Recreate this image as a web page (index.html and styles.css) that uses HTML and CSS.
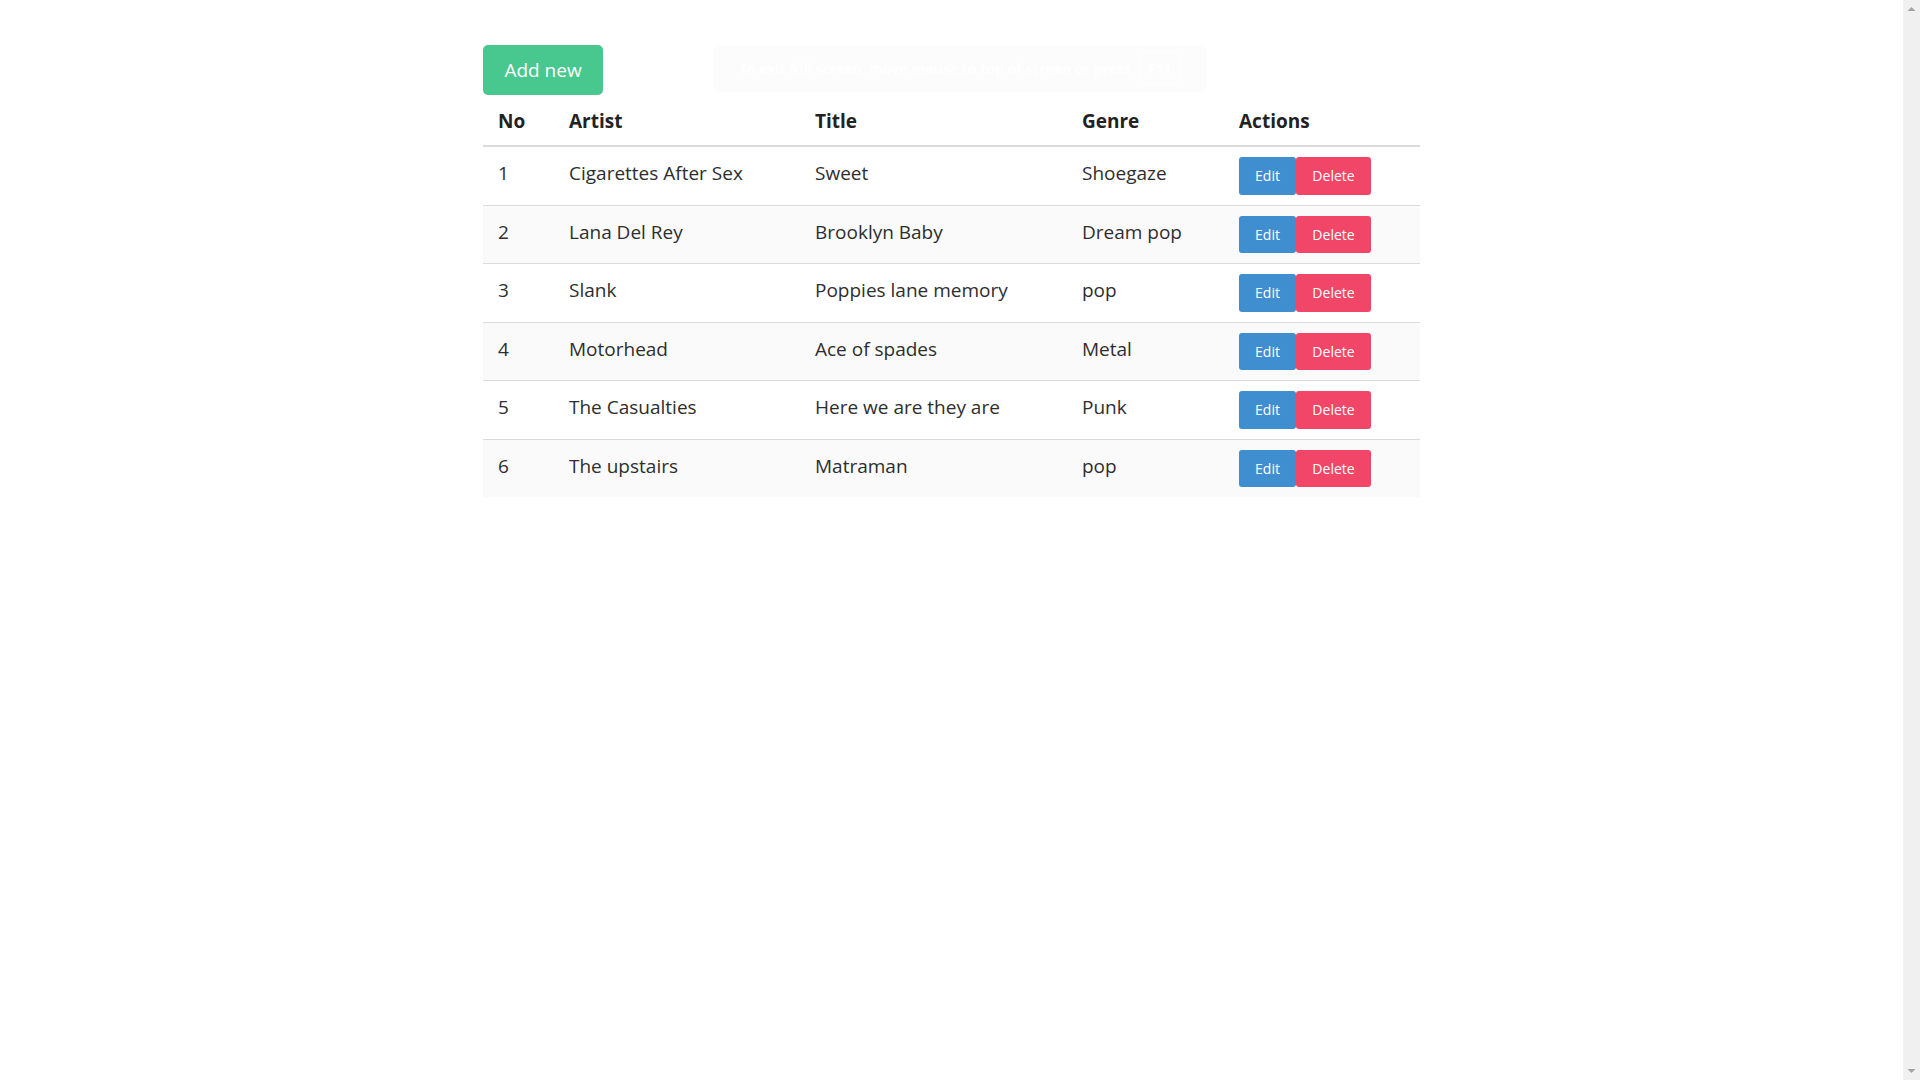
FILE: index.html
```html
<!DOCTYPE html>
<html lang="en">
<head>
<meta charset="utf-8">
<title>Songs</title>
<link rel="stylesheet" href="styles.css">
</head>
<body>
<div class="viewport">
  <div class="page">
    <div class="toolbar">
      <button class="btn btn-success">Add new</button>
    </div>
    <table class="table">
      <colgroup>
        <col class="col-no"><col class="col-artist"><col class="col-title"><col class="col-genre"><col class="col-actions">
      </colgroup>
      <thead>
        <tr><th>No</th><th>Artist</th><th>Title</th><th>Genre</th><th>Actions</th></tr>
      </thead>
      <tbody>
        <tr><td>1</td><td>Cigarettes After Sex</td><td>Sweet</td><td>Shoegaze</td><td class="cell-actions"><div class="actions"><button class="btn-sm btn-info">Edit</button><button class="btn-sm btn-danger">Delete</button></div></td></tr>
        <tr><td>2</td><td>Lana Del Rey</td><td>Brooklyn Baby</td><td>Dream pop</td><td class="cell-actions"><div class="actions"><button class="btn-sm btn-info">Edit</button><button class="btn-sm btn-danger">Delete</button></div></td></tr>
        <tr><td>3</td><td>Slank</td><td>Poppies lane memory</td><td>pop</td><td class="cell-actions"><div class="actions"><button class="btn-sm btn-info">Edit</button><button class="btn-sm btn-danger">Delete</button></div></td></tr>
        <tr><td>4</td><td>Motorhead</td><td>Ace of spades</td><td>Metal</td><td class="cell-actions"><div class="actions"><button class="btn-sm btn-info">Edit</button><button class="btn-sm btn-danger">Delete</button></div></td></tr>
        <tr><td>5</td><td>The Casualties</td><td>Here we are they are</td><td>Punk</td><td class="cell-actions"><div class="actions"><button class="btn-sm btn-info">Edit</button><button class="btn-sm btn-danger">Delete</button></div></td></tr>
        <tr><td>6</td><td>The upstairs</td><td>Matraman</td><td>pop</td><td class="cell-actions"><div class="actions"><button class="btn-sm btn-info">Edit</button><button class="btn-sm btn-danger">Delete</button></div></td></tr>
      </tbody>
    </table>
  </div>
</div>
<div class="scrollbar">
  <svg class="sb-arrow" width="17" height="17" viewBox="0 0 17 17"><path d="M4.5 11 L12.5 11 L8.5 7 Z" fill="#a3a3a3"/></svg>
  <svg class="sb-arrow" width="17" height="17" viewBox="0 0 17 17"><path d="M4.5 6 L12.5 6 L8.5 10 Z" fill="#a3a3a3"/></svg>
</div>
<div class="fs-notice">To exit full screen, move mouse to top of screen or press <kbd class="fs-key">F11</kbd></div>
</body>
</html>
```
FILE: styles.css
```css
html {
  overflow: hidden;
}
body {
  margin: 0;
  height: 100vh;
  display: flex;
  background: #ffffff;
  color: #2e2e2e;
  font-family: "Open Sans", "Noto Sans", sans-serif;
}
.viewport {
  flex: 1;
  min-width: 0;
}
.scrollbar {
  width: 17px;
  height: 100vh;
  flex: none;
  background: #f0f0f0;
  display: flex;
  flex-direction: column;
  justify-content: space-between;
}
.sb-arrow {
  display: block;
}
.page {
  width: 937px;
  margin: 0 auto;
  padding-top: 45px;
}
.toolbar {
  display: flex;
}
.btn {
  font-family: inherit;
  cursor: pointer;
}
.btn-success {
  width: 120px;
  height: 50px;
  padding: 0;
  background: #48c78e;
  color: #ffffff;
  border: 1px solid transparent;
  border-radius: 5px;
  font-size: 19px;
}
.table {
  width: 100%;
  table-layout: fixed;
  border-collapse: collapse;
  font-size: 19px;
  line-height: 30px;
}
.col-no { width: 71px; }
.col-artist { width: 246px; }
.col-title { width: 267px; }
.col-genre { width: 157px; }
.col-actions { width: 196px; }
.table th,
.table td {
  padding: 11px 15px 9px;
  text-align: left;
  vertical-align: top;
  border-bottom: 1px solid #dbdbdb;
  white-space: nowrap;
}
.table td.cell-actions {
  padding-top: 10px;
  padding-bottom: 10px;
}
.table th {
  font-weight: 700;
  color: #222222;
  border-bottom: 2.5px solid #dbdbdb;
}
.table tbody tr:nth-child(even) {
  background: #fafafa;
}
.table tbody tr:last-child td {
  border-bottom: 0;
}
.actions {
  display: flex;
}
.btn-sm {
  height: 37.5px;
  padding: 0;
  border: 1px solid transparent;
  border-radius: 3px;
  color: #ffffff;
  font-family: inherit;
  font-size: 14px;
  cursor: pointer;
}
.btn-info {
  width: 57px;
  background: #3e8ed0;
}
.btn-danger {
  width: 75px;
  background: #f14668;
}
.fs-notice {
  position: fixed;
  left: 713px;
  top: 45px;
  width: 494px;
  height: 47px;
  display: flex;
  align-items: center;
  justify-content: center;
  gap: 8px;
  background: #fcfcfc;
  border-radius: 8px;
  color: #ffffff;
  font-family: "Noto Sans", sans-serif;
  font-weight: 700;
  font-size: 14px;
}
.fs-key {
  font-family: inherit;
  border: 1px solid #ffffff;
  border-radius: 4px;
  padding: 6px 8px;
}
```
